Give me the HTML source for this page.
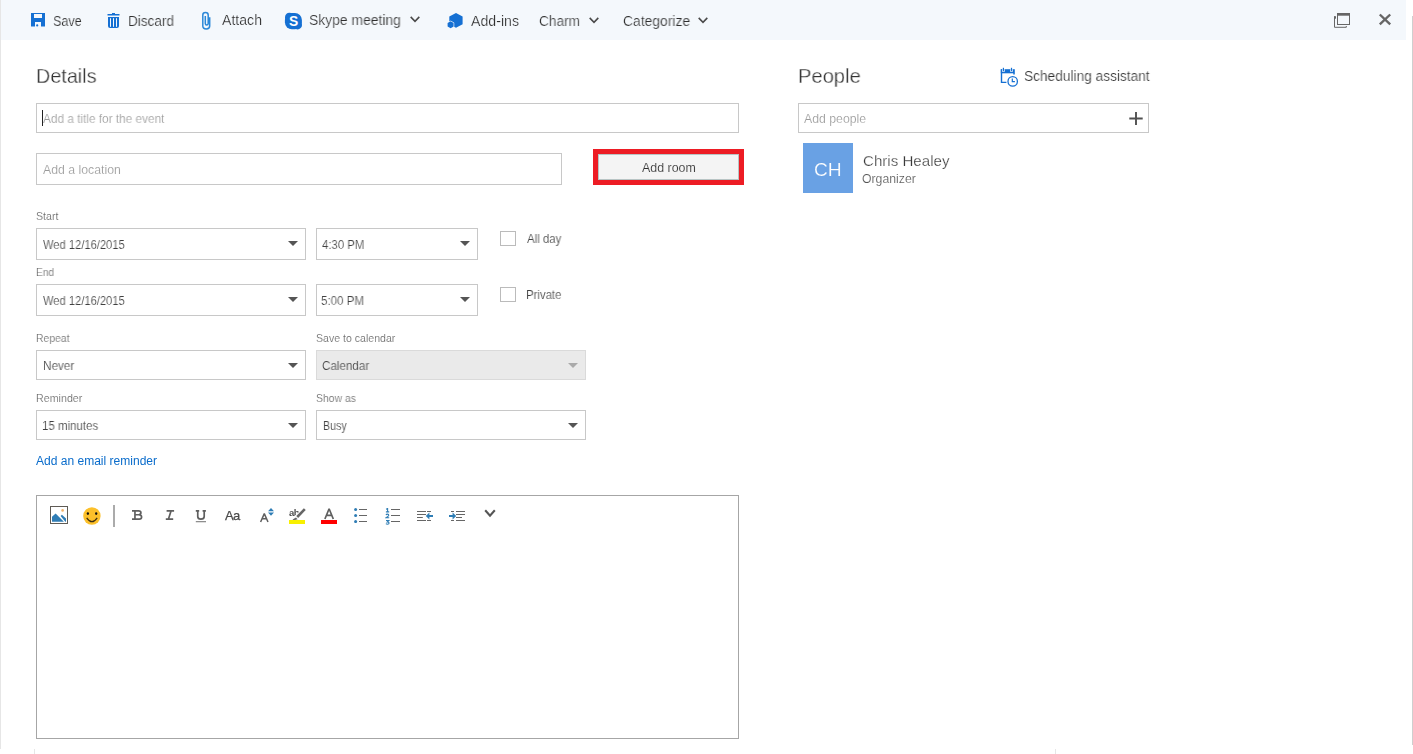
<!DOCTYPE html>
<html><head><meta charset="utf-8"><style>
html,body{margin:0;padding:0;background:#fff;width:1413px;height:754px;overflow:hidden;position:relative;font-family:"Liberation Sans", sans-serif}
body>div,body>svg{position:absolute}
.t{white-space:nowrap;will-change:transform}
</style></head><body>
<div style="left:0px;top:0px;width:1406px;height:40px;background:#f4f8fc"></div>
<div style="left:0px;top:0px;width:1px;height:749px;background:#e6e6e6"></div>
<div style="left:1412px;top:16px;width:1px;height:729px;background:#cfcfcf"></div>
<svg style="left:31px;top:13px" width="14" height="14" viewBox="0 0 14 14"><path fill="#1570d3" d="M0 0H14V13.4H10V9H4V13.4H0Z M3 1V5H11V1Z"/><circle cx="6.2" cy="12.4" r="1.1" fill="#1570d3"/></svg>
<svg style="left:107px;top:12px" width="13" height="16" viewBox="0 0 13 16"><path fill="#1570d3" d="M0.5 2H5V1H8V2H12.5V3.5H0.5Z"/><path fill="#1570d3" d="M1 5H12V14Q12 16 10 16H3Q1 16 1 14Z"/><rect x="3" y="6.2" width="1" height="8.6" fill="#f4f8fc"/><rect x="6" y="6.2" width="1" height="8.6" fill="#f4f8fc"/><rect x="9" y="6.2" width="1" height="8.6" fill="#f4f8fc"/></svg>
<svg style="left:196px;top:8px" width="20" height="24" viewBox="0 0 20 24"><path fill="none" stroke="#2b88d8" stroke-width="1.5" d="M13.7 9.2V18Q13.7 20.9 10.3 20.9Q6.8 20.9 6.8 18V7Q6.8 4.5 9.5 4.5Q12.2 4.5 12.2 7V15.6Q12.2 17.1 10.75 17.1Q9.3 17.1 9.3 15.6V8"/></svg>
<svg style="left:281px;top:8px" width="26" height="24" viewBox="0 0 26 24"><rect x="3.9" y="4.9" width="17" height="16.4" rx="7" fill="#1570d3"/><circle cx="8.4" cy="9.2" r="4.4" fill="#1570d3"/><circle cx="16.6" cy="17" r="4.4" fill="#1570d3"/><text x="12.5" y="18" text-anchor="middle" font-family="Liberation Sans" font-weight="bold" font-size="13.8" fill="#fff">S</text></svg>
<svg style="left:409.5px;top:16px" width="10" height="7" viewBox="0 0 10 7"><path fill="none" stroke="#4a4a4a" stroke-width="1.6" d="M0.7 0.9L5 5.3L9.3 0.9"/></svg>
<svg style="left:442px;top:8px" width="26" height="24" viewBox="0 0 26 24"><path fill="#1570d3" d="M14 5L20.6 8.6V16.2L14 19.8L7.3 16.2V8.6Z"/><path fill="#1570d3" stroke="#f4f8fc" stroke-width="1.3" stroke-linejoin="round" paint-order="stroke" d="M8.6 13.3L11.6 15V18.6L8.6 20.3L5.6 18.6V15Z"/></svg>
<svg style="left:589px;top:17px" width="10" height="7" viewBox="0 0 10 7"><path fill="none" stroke="#4a4a4a" stroke-width="1.6" d="M0.7 0.9L5 5.3L9.3 0.9"/></svg>
<svg style="left:698px;top:16.5px" width="10" height="7" viewBox="0 0 10 7"><path fill="none" stroke="#4a4a4a" stroke-width="1.6" d="M0.7 0.9L5 5.3L9.3 0.9"/></svg>
<svg style="left:1334px;top:13px" width="17" height="16" viewBox="0 0 17 16"><rect x="3.5" y="0.5" width="12" height="11" fill="none" stroke="#666" stroke-width="1"/><rect x="3" y="0" width="13" height="2.7" fill="#666"/><rect x="0" y="3.2" width="2" height="2.5" fill="#666"/><path fill="none" stroke="#666" stroke-width="1" d="M0.5 3.5V14.3H12.3V13"/></svg>
<svg style="left:1378px;top:13px" width="14" height="13" viewBox="0 0 14 13"><path stroke="#666" stroke-width="2.4" d="M1.8 1.5L12.2 11.3M12.2 1.5L1.8 11.3"/></svg>
<div style="left:36px;top:103px;width:703px;height:30px;border:1px solid #c8c8c8;box-sizing:border-box"></div>
<div style="left:42px;top:110px;width:1px;height:16px;background:#222"></div>
<div style="left:36px;top:153px;width:526px;height:32px;border:1px solid #c8c8c8;box-sizing:border-box"></div>
<div style="left:593px;top:149px;width:151px;height:36px;background:#ed1c24"></div>
<div style="left:598px;top:154px;width:141px;height:26px;background:#f4f4f4;border:1px solid #b8c4c4;box-sizing:border-box"></div>
<div style="left:36px;top:228px;width:270px;height:32px;background:#fff;border:1px solid #c8c8c8;box-sizing:border-box"></div>
<svg style="left:288px;top:241px" width="10" height="5" viewBox="0 0 10 5"><path fill="#555" d="M0 0H10L5 5Z"/></svg>
<div style="left:316px;top:228px;width:162px;height:32px;background:#fff;border:1px solid #c8c8c8;box-sizing:border-box"></div>
<svg style="left:460px;top:241px" width="10" height="5" viewBox="0 0 10 5"><path fill="#555" d="M0 0H10L5 5Z"/></svg>
<div style="left:36px;top:284px;width:270px;height:32px;background:#fff;border:1px solid #c8c8c8;box-sizing:border-box"></div>
<svg style="left:288px;top:297px" width="10" height="5" viewBox="0 0 10 5"><path fill="#555" d="M0 0H10L5 5Z"/></svg>
<div style="left:316px;top:284px;width:162px;height:32px;background:#fff;border:1px solid #c8c8c8;box-sizing:border-box"></div>
<svg style="left:460px;top:297px" width="10" height="5" viewBox="0 0 10 5"><path fill="#555" d="M0 0H10L5 5Z"/></svg>
<div style="left:36px;top:350px;width:270px;height:30px;background:#fff;border:1px solid #c8c8c8;box-sizing:border-box"></div>
<svg style="left:288px;top:363px" width="10" height="5" viewBox="0 0 10 5"><path fill="#555" d="M0 0H10L5 5Z"/></svg>
<div style="left:316px;top:350px;width:270px;height:30px;background:#eaeaea;border:1px solid #dadada;box-sizing:border-box"></div>
<svg style="left:568px;top:363px" width="10" height="5" viewBox="0 0 10 5"><path fill="#aaa" d="M0 0H10L5 5Z"/></svg>
<div style="left:36px;top:410px;width:270px;height:30px;background:#fff;border:1px solid #c8c8c8;box-sizing:border-box"></div>
<svg style="left:288px;top:423px" width="10" height="5" viewBox="0 0 10 5"><path fill="#555" d="M0 0H10L5 5Z"/></svg>
<div style="left:316px;top:410px;width:270px;height:30px;background:#fff;border:1px solid #c8c8c8;box-sizing:border-box"></div>
<svg style="left:568px;top:423px" width="10" height="5" viewBox="0 0 10 5"><path fill="#555" d="M0 0H10L5 5Z"/></svg>
<div style="left:500px;top:231px;width:16px;height:15px;border:1px solid #bbb;box-sizing:border-box"></div>
<div style="left:500px;top:287px;width:16px;height:15px;border:1px solid #bbb;box-sizing:border-box"></div>
<div style="left:36px;top:495px;width:703px;height:244px;border:1px solid #a6a6a6;box-sizing:border-box"></div>
<svg style="left:50px;top:506px" width="18" height="18" viewBox="0 0 18 18"><rect x="0.5" y="0.5" width="17" height="17" fill="#fff" stroke="#5f5b55" stroke-width="1"/><circle cx="12.6" cy="4.4" r="1.3" fill="#f2b36b"/><path fill="#2f7db5" d="M2 15.8V10.8L5.6 7.4L13.9 15.8Z"/><path fill="#2f7db5" d="M10.6 9.9L11.9 8.7L16 12.4V15.8H15.3Z"/></svg>
<svg style="left:82.5px;top:506.5px" width="18" height="18" viewBox="0 0 18 18"><circle cx="8.9" cy="9" r="8.7" fill="#fcc02a"/><ellipse cx="4.9" cy="6.6" rx="1.15" ry="1.3" fill="#111"/><ellipse cx="13.2" cy="6.6" rx="1.15" ry="1.3" fill="#111"/><path fill="none" stroke="#3d2e12" stroke-width="1.2" d="M3.7 10.8Q8.95 18.6 14.2 10.8"/></svg>
<div style="left:113px;top:505px;width:2px;height:22px;background:#ababab"></div>
<svg style="left:128px;top:506px" width="84" height="20" viewBox="0 0 84 20"><g fill="none" stroke="#5f5f5f" stroke-width="1.7"><path d="M4 4.85H10.6Q12.9 4.85 12.9 6.8Q12.9 8.75 10.6 8.75H7.2M10.8 8.75Q13.6 8.75 13.6 11.1Q13.6 13.15 11.2 13.15H4M6.95 4.85V13.15"/><path d="M38.6 4.85H46.1M37.8 13.15H45.2M43.1 4.85L40.4 13.15"/><path d="M67.8 4.85H71.2M74.6 4.85H77.9M69.75 4.85V10.4Q69.75 13.05 72.9 13.05Q76.2 13.05 76.2 10.4V4.85"/></g><rect x="67.8" y="15.3" width="10.2" height="0.9" fill="#5f5f5f"/></svg>
<div class="t" style="left:224.5px;top:509.00px;font-size:13px;line-height:13px;color:#4a4a4a;letter-spacing:-0.6px;-webkit-text-stroke:0.25px #4a4a4a">Aa</div>
<svg style="left:255px;top:508px" width="20" height="16" viewBox="0 0 20 16"><path fill="none" stroke="#5f5f5f" stroke-width="1.5" stroke-linejoin="bevel" d="M5.6 14L9.3 5.6L13 14M7.1 10.8H11.5"/></svg>
<svg style="left:268px;top:508px" width="6" height="8" viewBox="0 0 6 8"><path fill="#2f7db5" d="M0 3.2L3 0L6 3.2Z M0 4.6L3 7.8L6 4.6Z"/></svg>
<div class="t" style="left:288.8px;top:507.6px;font-size:9.5px;line-height:9.5px;color:#505050;font-weight:bold;letter-spacing:-0.5px">ab</div>
<svg style="left:284px;top:504px" width="24" height="20" viewBox="0 0 24 20"><path fill="#fff" d="M20.2 3.2L22.4 5.4L13.4 14.8L12 16.2L9 17.2L8.2 16.4L9.2 13.4L11 11.6Z"/><path fill="none" stroke="#666" stroke-width="2.6" d="M20.8 5.2L13.2 13"/><path fill="#666" d="M12 13.6L13.6 15.2L9.4 16.4L8.6 15.6Z"/></svg>
<div style="left:289px;top:520px;width:16px;height:4px;background:#f8f000"></div>
<svg style="left:320px;top:504px" width="20" height="16" viewBox="0 0 20 16"><path fill="none" stroke="#5f5f5f" stroke-width="1.7" stroke-linejoin="bevel" d="M4.9 15L9.1 4.8L13.3 15M6.5 11.3H11.7"/></svg>
<div style="left:321px;top:520px;width:16px;height:4px;background:#ff0000"></div>
<svg style="left:353px;top:508px" width="15" height="15" viewBox="0 0 15 15"><circle cx="2.6" cy="1.6" r="1.5" fill="#2f7db5"/><circle cx="2.6" cy="7.6" r="1.5" fill="#2f7db5"/><circle cx="2.6" cy="13.6" r="1.5" fill="#2f7db5"/><path stroke="#666" stroke-width="1" d="M6 1.5H14M6 7.5H14M6 13.5H14"/></svg>
<svg style="left:385px;top:508px" width="16" height="17" viewBox="0 0 16 17"><g fill="none" stroke="#2f7db5" stroke-width="1.1"><path d="M1.1 1.3L2.6 0.5V4M0.9 3.9H4.2"/><path d="M1 7Q1.4 6.1 2.5 6.1Q3.8 6.1 3.8 7.2Q3.8 8.1 1.1 9.7H4.2"/><path d="M1 12.5H3.8L2.3 13.9Q4.1 13.9 4.1 15.1Q4.1 16.2 2.5 16.2Q1.5 16.2 0.9 15.6"/></g><path stroke="#666" stroke-width="1" d="M6 1.5H15M6 7.5H15M6 13.5H15"/></svg>
<svg style="left:416px;top:510px" width="18" height="12" viewBox="0 0 18 12"><path stroke="#666" stroke-width="1" d="M1 1.5H10M11 1.5H15M1 4.5H10M1 7.5H6.8M1 10.5H10M11 10.5H15"/><path fill="#2f7db5" d="M9.8 6L13.4 2.6V5H17V7H13.4V9.4Z"/></svg>
<svg style="left:449px;top:510px" width="17" height="12" viewBox="0 0 17 12"><path stroke="#666" stroke-width="1" d="M2 1.5H5M7 1.5H16M7 4.5H16M7 7.5H13M7 10.5H16M2 10.5H5"/><path fill="#2f7db5" d="M7.2 6L3.6 2.6V5H0V7H3.6V9.4Z"/></svg>
<svg style="left:484px;top:509px" width="12" height="9" viewBox="0 0 12 9"><path fill="none" stroke="#555" stroke-width="2.1" d="M1.2 1.3L6 6.6L10.8 1.3"/></svg>
<div style="left:34px;top:749px;width:1px;height:5px;background:#e6e6e6"></div>
<div style="left:1055px;top:749px;width:1px;height:5px;background:#e6e6e6"></div>
<svg style="left:996px;top:64px" width="26" height="26" viewBox="0 0 26 26"><path fill="none" stroke="#1570d3" stroke-width="1.4" d="M5.5 5.2V18.4H10.4"/><rect x="4.8" y="5.2" width="14" height="4.1" fill="#1570d3"/><path fill="none" stroke="#1570d3" stroke-width="1.5" d="M18 9V10.5"/><rect x="6.1" y="5.2" width="2.6" height="2.6" fill="#fff"/><rect x="14.2" y="5.2" width="2.6" height="2.6" fill="#fff"/><rect x="6.8" y="3.8" width="1.2" height="3.4" fill="#1570d3"/><rect x="14.9" y="3.8" width="1.2" height="3.4" fill="#1570d3"/><circle cx="16.7" cy="17.4" r="4.7" fill="#fff" stroke="#1570d3" stroke-width="1.3"/><path fill="none" stroke="#1570d3" stroke-width="1.2" d="M16.3 14.4V17.6H18.9"/></svg>
<div style="left:798px;top:103px;width:351px;height:30px;border:1px solid #c8c8c8;box-sizing:border-box"></div>
<svg style="left:1129px;top:111px" width="14" height="15" viewBox="0 0 14 15"><path stroke="#505050" stroke-width="1.9" d="M7 1V14M0.3 7.5H13.7"/></svg>
<div style="left:803px;top:143px;width:50px;height:50px;background:#69a1e4"></div>
<div class="t" style="left:52.60px;top:14.00px;font-family:'Liberation Sans';font-size:14px;line-height:14px;color:#2e2e2e;transform:scaleX(0.9033);transform-origin:0 0;-webkit-text-stroke:0.2px #f4f8fc;">Save</div>
<div class="t" style="left:128.43px;top:14.00px;font-family:'Liberation Sans';font-size:14px;line-height:14px;color:#2e2e2e;transform:scaleX(0.9674);transform-origin:0 0;-webkit-text-stroke:0.2px #f4f8fc;">Discard</div>
<div class="t" style="left:221.70px;top:13.00px;font-family:'Liberation Sans';font-size:14px;line-height:14px;color:#2e2e2e;transform:scaleX(1.0077);transform-origin:0 0;-webkit-text-stroke:0.2px #f4f8fc;">Attach</div>
<div class="t" style="left:309.01px;top:13.00px;font-family:'Liberation Sans';font-size:14px;line-height:14px;color:#2e2e2e;transform:scaleX(0.9923);transform-origin:0 0;-webkit-text-stroke:0.2px #f4f8fc;">Skype meeting</div>
<div class="t" style="left:470.70px;top:13.50px;font-family:'Liberation Sans';font-size:14px;line-height:14px;color:#2e2e2e;transform:scaleX(1.0106);transform-origin:0 0;-webkit-text-stroke:0.2px #f4f8fc;">Add-ins</div>
<div class="t" style="left:538.92px;top:13.50px;font-family:'Liberation Sans';font-size:14px;line-height:14px;color:#2e2e2e;transform:scaleX(0.9775);transform-origin:0 0;-webkit-text-stroke:0.2px #f4f8fc;">Charm</div>
<div class="t" style="left:622.61px;top:14.00px;font-family:'Liberation Sans';font-size:14px;line-height:14px;color:#2e2e2e;transform:scaleX(0.9909);transform-origin:0 0;-webkit-text-stroke:0.2px #f4f8fc;">Categorize</div>
<div class="t" style="left:36.01px;top:65.00px;font-family:'Liberation Sans';font-size:21px;line-height:21px;color:#333;transform:scaleX(0.9426);transform-origin:0 0;-webkit-text-stroke:0.3px #fff;">Details</div>
<div class="t" style="left:43.20px;top:112.70px;font-family:'Liberation Sans';font-size:12px;line-height:12px;color:#9a9a9a;transform:scaleX(0.9837);transform-origin:0 0;-webkit-text-stroke:0.15px #fff;">Add a title for the event</div>
<div class="t" style="left:43.10px;top:164.00px;font-family:'Liberation Sans';font-size:12px;line-height:12px;color:#9a9a9a;transform:scaleX(1.0227);transform-origin:0 0;-webkit-text-stroke:0.15px #fff;">Add a location</div>
<div class="t" style="left:641.70px;top:162.00px;font-family:'Liberation Sans';font-size:12px;line-height:12px;color:#2e2e2e;transform:scaleX(1.0353);transform-origin:0 0;-webkit-text-stroke:0.15px #f4f4f4;">Add room</div>
<div class="t" style="left:35.79px;top:211.00px;font-family:'Liberation Sans';font-size:10.5px;line-height:10.5px;color:#666;transform:scaleX(1.0143);transform-origin:0 0;-webkit-text-stroke:0.15px #fff;">Start</div>
<div class="t" style="left:43.20px;top:239.00px;font-family:'Liberation Sans';font-size:12px;line-height:12px;color:#404040;transform:scaleX(0.9299);transform-origin:0 0;-webkit-text-stroke:0.15px #fff;">Wed 12/16/2015</div>
<div class="t" style="left:322.00px;top:239.00px;font-family:'Liberation Sans';font-size:12px;line-height:12px;color:#404040;transform:scaleX(0.9455);transform-origin:0 0;-webkit-text-stroke:0.15px #fff;">4:30 PM</div>
<div class="t" style="left:526.70px;top:233.00px;font-family:'Liberation Sans';font-size:12px;line-height:12px;color:#404040;transform:scaleX(0.9528);transform-origin:0 0;-webkit-text-stroke:0.15px #fff;">All day</div>
<div class="t" style="left:35.83px;top:267.00px;font-family:'Liberation Sans';font-size:10.5px;line-height:10.5px;color:#666;transform:scaleX(0.9706);transform-origin:0 0;-webkit-text-stroke:0.15px #fff;">End</div>
<div class="t" style="left:43.20px;top:295.00px;font-family:'Liberation Sans';font-size:12px;line-height:12px;color:#404040;transform:scaleX(0.9299);transform-origin:0 0;-webkit-text-stroke:0.15px #fff;">Wed 12/16/2015</div>
<div class="t" style="left:321.04px;top:295.00px;font-family:'Liberation Sans';font-size:12px;line-height:12px;color:#404040;transform:scaleX(0.9605);transform-origin:0 0;-webkit-text-stroke:0.15px #fff;">5:00 PM</div>
<div class="t" style="left:525.95px;top:289.00px;font-family:'Liberation Sans';font-size:12px;line-height:12px;color:#404040;transform:scaleX(0.9472);transform-origin:0 0;-webkit-text-stroke:0.15px #fff;">Private</div>
<div class="t" style="left:35.81px;top:333.00px;font-family:'Liberation Sans';font-size:10.5px;line-height:10.5px;color:#666;transform:scaleX(0.9879);transform-origin:0 0;-webkit-text-stroke:0.15px #fff;">Repeat</div>
<div class="t" style="left:315.59px;top:333.00px;font-family:'Liberation Sans';font-size:10.5px;line-height:10.5px;color:#666;transform:scaleX(1.0065);transform-origin:0 0;-webkit-text-stroke:0.15px #fff;">Save to calendar</div>
<div class="t" style="left:42.62px;top:360.00px;font-family:'Liberation Sans';font-size:12px;line-height:12px;color:#404040;transform:scaleX(0.9774);transform-origin:0 0;-webkit-text-stroke:0.15px #fff;">Never</div>
<div class="t" style="left:322.13px;top:360.00px;font-family:'Liberation Sans';font-size:12px;line-height:12px;color:#404040;transform:scaleX(0.9681);transform-origin:0 0;-webkit-text-stroke:0.15px #eaeaea;">Calendar</div>
<div class="t" style="left:35.78px;top:393.00px;font-family:'Liberation Sans';font-size:10.5px;line-height:10.5px;color:#666;transform:scaleX(1.0182);transform-origin:0 0;-webkit-text-stroke:0.15px #fff;">Reminder</div>
<div class="t" style="left:315.61px;top:393.00px;font-family:'Liberation Sans';font-size:10.5px;line-height:10.5px;color:#666;transform:scaleX(0.9897);transform-origin:0 0;-webkit-text-stroke:0.15px #fff;">Show as</div>
<div class="t" style="left:42.04px;top:420.00px;font-family:'Liberation Sans';font-size:12px;line-height:12px;color:#404040;transform:scaleX(0.9561);transform-origin:0 0;-webkit-text-stroke:0.15px #fff;">15 minutes</div>
<div class="t" style="left:322.81px;top:420.00px;font-family:'Liberation Sans';font-size:12px;line-height:12px;color:#404040;transform:scaleX(0.8885);transform-origin:0 0;-webkit-text-stroke:0.15px #fff;">Busy</div>
<div class="t" style="left:35.90px;top:455.00px;font-family:'Liberation Sans';font-size:12px;line-height:12px;color:#0a6ccb;transform:scaleX(1.0025);transform-origin:0 0;">Add an email reminder</div>
<div class="t" style="left:797.78px;top:65.00px;font-family:'Liberation Sans';font-size:21px;line-height:21px;color:#333;transform:scaleX(0.9597);transform-origin:0 0;-webkit-text-stroke:0.3px #fff;">People</div>
<div class="t" style="left:1023.92px;top:68.60px;font-family:'Liberation Sans';font-size:14px;line-height:14px;color:#2e2e2e;transform:scaleX(0.9780);transform-origin:0 0;-webkit-text-stroke:0.2px #fff;">Scheduling assistant</div>
<div class="t" style="left:804.00px;top:113.00px;font-family:'Liberation Sans';font-size:12px;line-height:12px;color:#9a9a9a;transform:scaleX(1.0233);transform-origin:0 0;-webkit-text-stroke:0.15px #fff;">Add people</div>
<div class="t" style="left:814.16px;top:161.00px;font-family:'Liberation Sans';font-size:18.5px;line-height:18.5px;color:#fff;transform:scaleX(1.0375);transform-origin:0 0;-webkit-text-stroke:0.2px #69a1e4;">CH</div>
<div class="t" style="left:862.79px;top:153.00px;font-family:'Liberation Sans';font-size:15px;line-height:15px;color:#3a3a3a;transform:scaleX(1.0071);transform-origin:0 0;-webkit-text-stroke:0.25px #fff;">Chris Healey</div>
<div class="t" style="left:862.28px;top:172.50px;font-family:'Liberation Sans';font-size:12px;line-height:12px;color:#555;transform:scaleX(1.0216);transform-origin:0 0;-webkit-text-stroke:0.15px #fff;">Organizer</div>
</body></html>
